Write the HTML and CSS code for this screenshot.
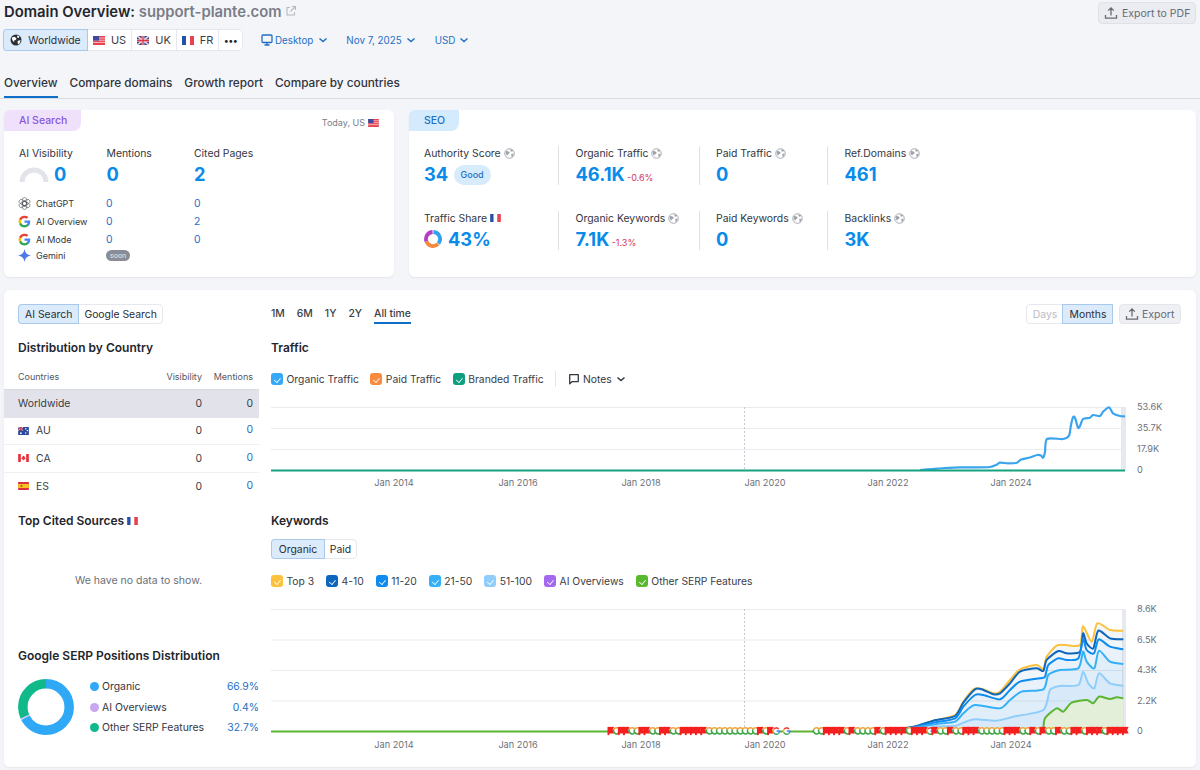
FILE: index.html
```html
<!DOCTYPE html>
<html lang="en">
<head>
<meta charset="utf-8">
<title>Domain Overview</title>
<link rel="stylesheet" href="styles.css">
</head>
<body>
<svg class="sprite" width="0" height="0" aria-hidden="true">
  <symbol id="f-us" viewBox="0 0 12 9"><rect width="12" height="9" fill="#e8424f"/><path d="M0 2h12M0 4.2h12M0 6.4h12" stroke="#f6c9cd" stroke-width=".9"/><rect width="6" height="4.6" fill="#3f4a9e"/></symbol>
  <symbol id="f-uk" viewBox="0 0 12 9"><rect width="12" height="9" fill="#3f4a8e"/><path d="M0 0l12 9M12 0L0 9" stroke="#f1d9dc" stroke-width="1.6"/><path d="M6 0v9M0 4.5h12" stroke="#f1d9dc" stroke-width="2.6"/><path d="M6 0v9M0 4.5h12" stroke="#d9364a" stroke-width="1.3"/></symbol>
  <symbol id="f-fr" viewBox="0 0 12 9"><rect width="4" height="9" fill="#2452a8"/><rect x="4" width="4" height="9" fill="#fff"/><rect x="8" width="4" height="9" fill="#e8424f"/></symbol>
  <symbol id="f-au" viewBox="0 0 12 9"><rect width="12" height="9" fill="#2b4a9c"/><path d="M0 0l5.5 4M5.5 0L0 4" stroke="#f3e1e4" stroke-width="1"/><path d="M2.8 0v4.2M0 2.1h5.6" stroke="#d9364a" stroke-width="1"/><circle cx="8.5" cy="2" r=".8" fill="#fff"/><circle cx="10.3" cy="4" r=".8" fill="#fff"/><circle cx="8.4" cy="6.8" r=".8" fill="#fff"/><circle cx="3" cy="7" r="1" fill="#fff"/></symbol>
  <symbol id="f-ca" viewBox="0 0 12 9"><rect width="12" height="9" fill="#fff"/><rect width="3" height="9" fill="#e8303f"/><rect x="9" width="3" height="9" fill="#e8303f"/><path d="M6 1.6l1 1.6.8-.3-.3 2 .9-.3-.5 1.3L6.2 6.400V7.600h-.4V6.400L4.100 5.900l-.5-1.300.9.300-.3-2 .8.300z" fill="#e8303f"/></symbol>
  <symbol id="f-es" viewBox="0 0 12 9"><rect width="12" height="9" fill="#d9303e"/><rect y="2.250" width="12" height="4.500" fill="#f7c21e"/><rect x="2.800" y="3.300" width="1.800" height="2.300" fill="#b5542a"/></symbol>
  <symbol id="i-globe" viewBox="0 0 12 12"><circle cx="6" cy="6" r="5.200" fill="#fff" stroke="#9ea2ab" stroke-width="1"/><path d="M2 3.400l2.600.2 1.700 1.500-1 1.400-1.300.2-.4 2-1.700-2.300zM7.200 1.400l2.800 1.300-1.200 1.500-1.900-.6zM8 6.400l2.500-.2-.8 2.900-1.500.8z" fill="#9ea2ab"/></symbol>
  <symbol id="i-world" viewBox="0 0 12 12"><circle cx="6" cy="6" r="5.500" fill="#2b3038"/><path d="M1.800 3.600l2.800-.8 2 1.600-1 1.700-1.200.2-.4 2-1.700-2.300zM7.400 1.400l2.200 1-1.200 1.500-1.500-.6zM7.500 7l3.100-1-.9 3.300-1.700 1.200z" fill="#fff"/></symbol>
  <symbol id="i-google" viewBox="0 0 24 24"><path d="M22.500 12.300c0-.8-.1-1.500-.2-2.200H12v4.200h5.900a5 5 0 0 1-2.200 3.300v2.700h3.500c2.100-1.900 3.300-4.700 3.300-8z" fill="#4285f4"/><path d="M12 23c3 0 5.400-1 7.200-2.700l-3.500-2.700c-1 .7-2.200 1-3.700 1-2.800 0-5.300-1.900-6.100-4.500H2.300v2.800A11 11 0 0 0 12 23z" fill="#34a853"/><path d="M5.900 14.100a6.600 6.600 0 0 1 0-4.200V7.100H2.300a11 11 0 0 0 0 9.800z" fill="#fbbc05"/><path d="M12 5.400c1.600 0 3 .5 4.100 1.600l3.100-3.100A11 11 0 0 0 2.300 7.100l3.600 2.800C6.700 7.300 9.200 5.400 12 5.400z" fill="#ea4335"/></symbol>
  <symbol id="i-gpt" viewBox="0 0 24 24"><g fill="none" stroke="#55585f" stroke-width="1.100"><rect x="8" y="1" width="8" height="15" rx="4"/><rect x="8" y="1" width="8" height="15" rx="4" transform="rotate(60 12 12)"/><rect x="8" y="1" width="8" height="15" rx="4" transform="rotate(120 12 12)"/><rect x="8" y="1" width="8" height="15" rx="4" transform="rotate(180 12 12)"/><rect x="8" y="1" width="8" height="15" rx="4" transform="rotate(240 12 12)"/><rect x="8" y="1" width="8" height="15" rx="4" transform="rotate(300 12 12)"/></g></symbol>
  <symbol id="i-gemini" viewBox="0 0 24 24"><path d="M12 0c.8 6.600 4.800 11 12 12-7.200 1-11.200 5.400-12 12-.8-6.600-4.800-11-12-12 7.200-1 11.200-5.400 12-12z" fill="#4f79ea"/></symbol>
  <symbol id="i-ext" viewBox="0 0 12 12"><path d="M5 2.500H2v7.500h7.500V7M7 1.500h3.500V5M10.500 1.500L5.500 6.500" fill="none" stroke="#b5b8c0" stroke-width="1.100"/></symbol>
  <symbol id="i-up" viewBox="0 0 14 14"><path d="M7 9.500V2M4.200 4.600L7 1.800l2.800 2.800M1.500 9v3.200h11V9" fill="none" stroke="currentColor" stroke-width="1.300"/></symbol>
  <symbol id="i-chev" viewBox="0 0 10 10"><path d="M1.500 3.500l3.500 3 3.500-3" fill="none" stroke="currentColor" stroke-width="1.500"/></symbol>
  <symbol id="i-desk" viewBox="0 0 12 12"><rect x="1" y="1" width="10" height="7.500" rx="1" fill="none" stroke="currentColor" stroke-width="1.300"/><path d="M3.500 11h5M6 8.500V11" stroke="currentColor" stroke-width="1.300"/></symbol>
  <symbol id="i-note" viewBox="0 0 14 14"><path d="M2 2h10v8H5l-3 2.500z" fill="none" stroke="currentColor" stroke-width="1.500" stroke-linejoin="round"/></symbol>
  <symbol id="m-flag" viewBox="0 0 9 9"><path d="M.5.200H7.200L5.600 3.400 7.200 7H2.400V8.800H.5z" fill="#f51f1f"/></symbol>
  <symbol id="m-g" viewBox="0 0 9 9"><circle cx="4.500" cy="4.500" r="3.200" fill="#fff"/><path d="M1.700 3A3.200 3.200 0 0 1 7 2.600" fill="none" stroke="#ea4335" stroke-width="1.500"/><path d="M1.700 3A3.200 3.200 0 0 0 1.700 6" fill="none" stroke="#fbbc05" stroke-width="1.500"/><path d="M1.700 6A3.200 3.200 0 0 0 6.600 7" fill="none" stroke="#34a853" stroke-width="1.500"/><path d="M6.600 7A3.200 3.200 0 0 0 7.700 4.500H4.700" fill="none" stroke="#4285f4" stroke-width="1.500"/></symbol>
  <symbol id="m-c" viewBox="0 0 9 9"><circle cx="4.500" cy="4.500" r="3.200" fill="#fff"/><path d="M7.300 3A3.200 3.200 0 0 0 1.700 3" fill="none" stroke="#f0a030" stroke-width="1.500"/><path d="M1.700 3A3.200 3.200 0 0 0 7.300 6" fill="none" stroke="#3fa648" stroke-width="1.500"/></symbol>
</svg>

<header class="page-head">
  <div class="title-row">
    <h1 class="title">Domain Overview: <span class="domain">support-plante.com</span> <svg class="ext"><use href="#i-ext"/></svg></h1>
    <button class="btn-pdf"><svg class="ic14"><use href="#i-up"/></svg>Export to PDF</button>
  </div>
  <div class="filters">
    <div class="seg seg-country">
      <span class="seg-item is-on"><svg class="ic12"><use href="#i-world"/></svg>Worldwide</span>
      <span class="seg-item"><svg class="flag"><use href="#f-us"/></svg>US</span>
      <span class="seg-item"><svg class="flag"><use href="#f-uk"/></svg>UK</span>
      <span class="seg-item"><svg class="flag"><use href="#f-fr"/></svg>FR</span>
      <span class="seg-item seg-more">•••</span>
    </div>
    <a class="drop drop-device"><svg class="ic12"><use href="#i-desk"/></svg>Desktop<svg class="ic10"><use href="#i-chev"/></svg></a>
    <a class="drop drop-date">Nov 7, 2025<svg class="ic10"><use href="#i-chev"/></svg></a>
    <a class="drop drop-cur">USD<svg class="ic10"><use href="#i-chev"/></svg></a>
  </div>
  <nav class="tabs">
    <a class="tab is-on">Overview</a>
    <a class="tab">Compare domains</a>
    <a class="tab">Growth report</a>
    <a class="tab">Compare by countries</a>
  </nav>
</header>

<section class="cards">
  <article class="card card-ai">
    <div class="card-tab tab-ai">AI Search</div>
    <div class="today">Today, US <svg class="flag"><use href="#f-us"/></svg></div>
    <div class="ai-grid">
      <div class="label">AI Visibility</div><div class="label">Mentions</div><div class="label">Cited Pages</div>
      <div class="big gauge-cell"><svg class="gauge" viewBox="0 0 30 15"><path d="M3 15a12 12 0 0 1 24 0" fill="none" stroke="#e2e4ea" stroke-width="5"/></svg>0</div><div class="big">0</div><div class="big">2</div>
    </div>
    <div class="ai-rows">
      <div class="ai-name"><svg class="ic13"><use href="#i-gpt"/></svg>ChatGPT</div><div class="ai-v">0</div><div class="ai-v">0</div>
      <div class="ai-name"><svg class="ic13"><use href="#i-google"/></svg>AI Overview</div><div class="ai-v">0</div><div class="ai-v">2</div>
      <div class="ai-name"><svg class="ic13"><use href="#i-google"/></svg>AI Mode</div><div class="ai-v">0</div><div class="ai-v">0</div>
      <div class="ai-name"><svg class="ic13"><use href="#i-gemini"/></svg>Gemini</div><div><span class="soon">soon</span></div><div></div>
    </div>
  </article>

  <article class="card card-seo">
    <div class="card-tab tab-seo">SEO</div>
    <div class="seo-grid">
      <div class="metric"><div class="label">Authority Score <svg class="ic11"><use href="#i-globe"/></svg></div><div class="big">34 <span class="good">Good</span></div></div>
      <div class="metric ruled"><div class="label">Organic Traffic <svg class="ic11"><use href="#i-globe"/></svg></div><div class="big">46.1K <span class="delta">-0.6%</span></div></div>
      <div class="metric ruled"><div class="label">Paid Traffic <svg class="ic11"><use href="#i-globe"/></svg></div><div class="big">0</div></div>
      <div class="metric ruled"><div class="label">Ref.Domains <svg class="ic11"><use href="#i-globe"/></svg></div><div class="big">461</div></div>
      <div class="metric"><div class="label">Traffic Share <svg class="flag"><use href="#f-fr"/></svg></div><div class="big share"><svg class="share-ring" viewBox="0 0 18 18"><g fill="none" stroke-width="3.800"><path d="M9.400 2a7 7 0 0 1 5 11.500" stroke="#2fa3f2"/><path d="M14 13.900A7 7 0 0 1 2.400 11.400" stroke="#f58a3c"/><path d="M2.400 11.400A7 7 0 0 1 8.600 2" stroke="#b43fc4"/></g></svg>43%</div></div>
      <div class="metric ruled"><div class="label">Organic Keywords <svg class="ic11"><use href="#i-globe"/></svg></div><div class="big">7.1K <span class="delta">-1.3%</span></div></div>
      <div class="metric ruled"><div class="label">Paid Keywords <svg class="ic11"><use href="#i-globe"/></svg></div><div class="big">0</div></div>
      <div class="metric ruled"><div class="label">Backlinks <svg class="ic11"><use href="#i-globe"/></svg></div><div class="big">3K</div></div>
    </div>
  </article>
</section>

<main class="card panel">
  <aside class="side">
    <div class="seg seg-small seg-source side-pad"><span class="seg-item is-on">AI Search</span><span class="seg-item">Google Search</span></div>
    <h2 class="h2 side-pad h-dist">Distribution by Country</h2>
    <div class="table">
      <div class="tr th"><span class="c1">Countries</span><span class="c2">Visibility</span><span class="c3">Mentions</span></div>
      <div class="tr is-sel"><span class="c1">Worldwide</span><span class="c2">0</span><span class="c3">0</span></div>
      <div class="tr"><span class="c1"><svg class="flag"><use href="#f-au"/></svg>AU</span><span class="c2">0</span><span class="c3 link">0</span></div>
      <div class="tr"><span class="c1"><svg class="flag"><use href="#f-ca"/></svg>CA</span><span class="c2">0</span><span class="c3 link">0</span></div>
      <div class="tr"><span class="c1"><svg class="flag"><use href="#f-es"/></svg>ES</span><span class="c2">0</span><span class="c3 link">0</span></div>
    </div>
    <h2 class="h2 side-pad h-cited">Top Cited Sources <svg class="flag"><use href="#f-fr"/></svg></h2>
    <p class="empty">We have no data to show.</p>
    <h2 class="h2 side-pad">Google SERP Positions Distribution</h2>
    <div class="serp side-pad">
      <svg class="donut" viewBox="0 0 56 56"><g fill="none" stroke-width="9.500" transform="rotate(-90 28 28)"><circle cx="28" cy="28" r="23.200" stroke="#2fa9f6" stroke-dasharray="97.500 48.300"/><circle cx="28" cy="28" r="23.200" stroke="#c9a7f0" stroke-dasharray="1 144.800" stroke-dashoffset="-97.900"/><circle cx="28" cy="28" r="23.200" stroke="#10b98a" stroke-dasharray="47 98.800" stroke-dashoffset="-98.800"/></g></svg>
      <ul class="serp-list">
        <li><i class="dot d-org"></i><span>Organic</span><b>66.9%</b></li>
        <li><i class="dot d-ai"></i><span>AI Overviews</span><b>0.4%</b></li>
        <li><i class="dot d-oth"></i><span>Other SERP Features</span><b>32.7%</b></li>
      </ul>
    </div>
  </aside>

  <section class="charts">
    <div class="toolbar">
      <div class="periods"><span>1M</span><span>6M</span><span>1Y</span><span>2Y</span><span class="is-on">All time</span></div>
      <div class="tools">
        <div class="seg seg-small"><span class="seg-item is-off">Days</span><span class="seg-item is-on">Months</span></div>
        <button class="btn-export"><svg class="ic14"><use href="#i-up"/></svg>Export</button>
      </div>
    </div>
    <h2 class="h2 h-traffic">Traffic</h2>
    <div class="legend legend-t">
      <span class="chk"><i class="box c-blue"></i>Organic Traffic</span>
      <span class="chk"><i class="box c-orange"></i>Paid Traffic</span>
      <span class="chk"><i class="box c-teal"></i>Branded Traffic</span>
      <span class="notes"><svg class="ic12"><use href="#i-note"/></svg>Notes<svg class="ic10"><use href="#i-chev"/></svg></span>
    </div>
    <svg class="chart chart-t" viewBox="271 400 925 90">
      <path class="grid" d="M271 407.500H1125M271 428.500H1125M271 449.500H1125"/>
      <path class="dash" d="M744.500 407V470"/>
      <rect class="band" x="1121" y="407" width="5" height="63"/>
      <polyline class="line-traffic js-smooth" points="920,470 933,469 945,468 960,467.300 975,467.400 990,467 996,465 1000,462.700 1008,463.300 1017,462.700 1021,459.500 1030,457.500 1037,455 1041,455.500 1043,457.700 1045,452 1047,439 1063,439 1069,435.700 1071,425 1073,417.300 1075,417.700 1078,427.700 1080,426 1083,419 1090,417.700 1093,415 1100,416 1103,411.700 1109,407.300 1113,413.300 1120,416 1125,416.300"/>
      <path class="line-green" d="M271 470.500H1125"/>
      <g class="ax"><text x="1137" y="410">53.6K</text><text x="1137" y="431">35.7K</text><text x="1137" y="452">17.9K</text><text x="1137" y="473">0</text></g>
      <g class="ax ax-x"><text x="394" y="486">Jan 2014</text><text x="518" y="486">Jan 2016</text><text x="641" y="486">Jan 2018</text><text x="765" y="486">Jan 2020</text><text x="888" y="486">Jan 2022</text><text x="1011" y="486">Jan 2024</text></g>
    </svg>
    <h2 class="h2 h-kw">Keywords</h2>
    <div class="seg seg-small seg-kw"><span class="seg-item is-on">Organic</span><span class="seg-item">Paid</span></div>
    <div class="legend legend-k">
      <span class="chk"><i class="box c-yellow"></i>Top 3</span>
      <span class="chk"><i class="box c-navy"></i>4-10</span>
      <span class="chk"><i class="box c-azure"></i>11-20</span>
      <span class="chk"><i class="box c-sky"></i>21-50</span>
      <span class="chk"><i class="box c-pale"></i>51-100</span>
      <span class="chk"><i class="box c-purple"></i>AI Overviews</span>
      <span class="chk"><i class="box c-green"></i>Other SERP Features</span>
    </div>
    <svg class="chart chart-k" viewBox="271 600 925 150">
      <path class="grid" d="M271 609.500H1125M271 640H1125M271 670.500H1125M271 701H1125"/>
      <path class="dash" d="M744.500 609V731"/>
      <rect class="band" x="1122" y="609" width="4" height="122"/>
      <g transform="translate(900 600) scale(.33333)">
        <polygon class="area a1" points="-30,393 50,378 100,362 165,345 190,305 220,268 245,266 280,280 300,275 330,240 360,208 410,195 430,208 440,170 470,137 495,135 540,135 549,78 575,125 592,70 630,90 670,92 670,393"/>
        <polygon class="area a2" points="-30,393 50,380 100,368 165,355 190,320 225,285 250,285 300,298 330,270 360,245 420,235 435,230 445,195 475,175 500,180 535,175 549,118 560,150 582,160 596,118 630,140 670,148 670,393"/>
        <polygon class="area a3" points="-30,393 50,382 110,372 165,365 190,340 225,315 300,325 330,300 365,275 430,268 445,225 480,210 535,205 549,155 560,185 583,205 597,152 630,185 670,192 670,393"/>
        <polygon class="area a4" points="80,393 100,380 165,378 190,368 225,358 290,362 340,350 430,330 450,270 480,258 535,255 549,215 565,250 583,265 597,220 630,250 670,257 670,393"/>
        <polygon class="area a5" points="430,393 435,355 470,325 490,335 515,308 560,300 580,310 597,290 630,297 650,292 670,295 670,393"/>
        <polyline class="kl kl-y js-smooth" points="-30,393 50,378 100,362 165,345 190,305 220,268 245,266 280,280 300,275 330,240 360,208 410,195 430,208 440,170 470,137 495,135 540,135 549,78 575,125 592,70 630,90 670,92"/>
        <polyline class="kl kl-n js-smooth" points="-30,393 50,378 100,362 165,348 190,308 225,268 245,268 280,283 300,280 330,250 360,215 410,205 430,213 440,180 475,153 500,160 540,155 549,100 560,130 580,145 595,92 630,115 670,118"/>
        <polyline class="kl kl-a js-smooth" points="-30,393 50,380 100,368 165,355 190,320 225,285 250,285 300,298 330,270 360,245 420,235 435,230 445,195 475,175 500,180 535,175 549,118 560,150 582,160 596,118 630,140 670,148"/>
        <polyline class="kl kl-s js-smooth" points="-30,393 50,382 110,372 165,365 190,340 225,315 300,325 330,300 365,275 430,268 445,225 480,210 535,205 549,155 560,185 583,205 597,152 630,185 670,192"/>
        <polyline class="kl kl-p js-smooth" points="80,393 100,380 165,378 190,368 225,358 290,362 340,350 430,330 450,270 480,258 535,255 549,215 565,250 583,265 597,220 630,250 670,257"/>
        <polyline class="kl kl-g js-smooth" points="430,393 435,355 470,325 490,335 515,308 560,300 580,310 597,290 630,297 650,292 670,295"/>
      </g>
      <path class="line-lime" d="M271 731.500H1125"/>
      <g id="markers"></g>
      <g class="ax"><text x="1137" y="612">8.6K</text><text x="1137" y="642.500">6.5K</text><text x="1137" y="673">4.3K</text><text x="1137" y="703.500">2.2K</text><text x="1137" y="734">0</text></g>
      <g class="ax ax-x"><text x="394" y="748">Jan 2014</text><text x="518" y="748">Jan 2016</text><text x="641" y="748">Jan 2018</text><text x="765" y="748">Jan 2020</text><text x="888" y="748">Jan 2022</text><text x="1011" y="748">Jan 2024</text></g>
    </svg>
  </section>
</main>
<script src="markers.js"></script>
</body>
</html>
```

FILE: styles.css
```css
* { box-sizing: border-box; }
html, body { margin: 0; padding: 0; }
body {
  width: 1200px; height: 770px; overflow: hidden;
  background: #f4f5f9; color: #2a2d35;
  font-family: Inter, "Liberation Sans", sans-serif; font-size: 11px;
}
.sprite { position: absolute; }
svg { flex: none; }
.ic10 { width: 10px; height: 10px; }
.ic11 { width: 11px; height: 11px; vertical-align: -2px; }
.ic12 { width: 12px; height: 12px; }
.ic13 { width: 13px; height: 13px; }
.ic14 { width: 14px; height: 14px; }
.flag { width: 11px; height: 8px; }
a { color: inherit; text-decoration: none; }
h1, h2, p, ul { margin: 0; padding: 0; }

.page-head { height: 99px; padding: 0 4px; border-bottom: 1px solid #dadce3; display: flex; flex-direction: column; }
.title-row { display: flex; justify-content: space-between; align-items: flex-start; height: 26px; padding-top: 2px; }
.title { font-size: 14.800px; font-weight: 600; line-height: 21px; color: #23262d; }
.domain { color: #7a7d87; }
.ext { width: 12px; height: 12px; vertical-align: 0; }
.btn-pdf { display: flex; align-items: center; gap: 4px; height: 22px; width: 98px; padding: 0 0 0 5px; border: 1px solid #dfe1e6; border-radius: 4px; background: #eaecf1; color: #676a74; font: 10.500px Inter, sans-serif; }

.filters { display: flex; align-items: center; height: 22px; margin-top: 3px; margin-left: -1px; }
.seg { display: inline-flex; border: 1px solid #e6e8ed; border-radius: 4px; background: #fff; }
.seg-item { display: flex; align-items: center; justify-content: center; gap: 5px; height: 100%; border-left: 1px solid #e6e8ed; }
.seg-item:first-child { border-left: 0; border-radius: 3px 0 0 3px; }
.seg-item.is-on { background: #dcebfb; box-shadow: 0 0 0 1px #a9c9ea; color: #2a2d35; position: relative; }
.seg-item.is-off { color: #b9bcc4; }
.seg-country { height: 22px; font-size: 11px; color: #3a3d46; }
.seg-country .flag { width: 12px; height: 9px; }
.seg-country .seg-item { gap: 6px; }
.seg-country .seg-item:nth-child(1) { width: 83px; font-size: 10.400px; }
.seg-country .seg-item:nth-child(2) { width: 44px; }
.seg-country .seg-item:nth-child(3) { width: 45px; }
.seg-country .seg-item:nth-child(4) { width: 42px; }
.seg-country .seg-item:nth-child(5) { width: 24px; }
.seg-more { font-size: 9px; letter-spacing: -.5px; color: #23262d; }
.drop { display: inline-flex; align-items: center; gap: 4px; color: #1e6fc4; font-size: 9.800px; }
.drop-device { margin-left: 18px; gap: 2px; }
.drop-device .ic10 { margin-left: 3px; }
.drop-date { margin-left: 18px; }
.drop-cur { margin-left: 19px; }

.tabs { display: flex; gap: 12px; margin-top: auto; height: 28px; }
.tab { display: block; height: 28px; padding-top: 5px; line-height: 16px; font-size: 11.800px; font-weight: 500; color: #30333b; }
.tab.is-on { border-bottom: 2px solid #0f6fc6; }

.cards { display: flex; gap: 15px; padding: 0 4px; margin-top: 11px; }
.card { background: #fff; border-radius: 6px; box-shadow: 0 1px 2px rgba(40,50,70,.08); }
.card-ai { width: 390px; height: 167px; position: relative; }
.card-seo { flex: 1; height: 167px; }
.card-tab { height: 21px; line-height: 21px; font-size: 10.500px; font-weight: 500; border-radius: 6px 0 8px 0; }
.tab-ai { width: 77px; padding-left: 15px; background: #efe1fb; color: #8a55dd; }
.tab-seo { width: 50px; padding-left: 15px; background: #d3ebfc; color: #1d6fbe; }
.today { position: absolute; top: 7px; right: 15px; display: flex; align-items: center; gap: 3px; font-size: 9px; color: #7a7d87; }

.label { font-size: 10.400px; height: 14px; line-height: 16px; color: #33363e; white-space: nowrap; }
.big { font-size: 18.300px; font-weight: 650; line-height: 24px; color: #0a8bea; white-space: nowrap; }
.ai-grid { display: grid; grid-template-columns: 87.500px 87.500px 1fr; padding: 15px 0 0 15px; row-gap: 2px; }
.gauge-cell { display: flex; align-items: center; gap: 5px; }
.gauge { width: 30px; height: 15px; }
.ai-rows { display: grid; grid-template-columns: 88px 88px 1fr; grid-template-rows: 18px 18px 18px 15px; padding: 8px 0 0 14px; font-size: 9px; align-items: center; }
.ai-name { display: flex; align-items: center; gap: 5px; color: #33363e; }
.ai-v { color: #1e6fc4; font-size: 10.400px; }
.soon { display: inline-block; height: 11px; line-height: 11px; padding: 0 4px; border-radius: 6px; background: #8a8d97; color: #e6e7ea; font-size: 7px; vertical-align: 1px; }

.seo-grid { display: grid; grid-template-columns: 149px 140.500px 128.500px 1fr; grid-template-rows: 39px 39px; row-gap: 26px; margin-top: 15px; }
.metric { padding-left: 15px; }
.metric.ruled { padding-left: 16.500px; border-left: 1px solid #dfe1e6; height: 39px; }
.metric .big { margin-top: 2px; }
.good { display: inline-block; height: 20px; line-height: 20px; padding: 0 7px; margin-left: 1px; border-radius: 10px; background: #d6ebfb; color: #1e6fc4; font-size: 9px; font-weight: 500; vertical-align: 3px; }
.delta { font-size: 9px; font-weight: 400; color: #d6345a; margin-left: -2px; vertical-align: 0; }
.share { display: flex; align-items: center; gap: 6px; }
.share-ring { width: 18px; height: 18px; }

.panel { margin: 13px 4px 0; height: 477px; display: flex; gap: 12px; }
.side { width: 255px; padding-top: 14px; }
.side-pad { margin-left: 14px; }
.seg-small { height: 20px; font-size: 10.400px; }
.seg-small .seg-item { padding: 0 6px; }
.seg-source .seg-item:last-child { padding: 0 5px; }
.h2 { font-size: 12px; font-weight: 600; line-height: 16px; color: #23262d; }
.h-dist { margin-top: 16px; }
.table { margin-top: 8.500px; }
.tr { display: flex; align-items: center; height: 27.500px; padding-left: 14px; font-size: 10.400px; border-bottom: 1px solid #eef0f3; color: #3a3d46; }
.tr.th { height: 25px; font-size: 9px; color: #54575f; border-bottom: 1px solid #d8dae1; }
.tr.is-sel { height: 28px; background: #e2e3ea; border-bottom: 0; }
.tr:last-child { border-bottom: 0; }
.c1 { flex: 1; display: flex; align-items: center; gap: 7px; }
.c2 { width: 50px; text-align: right; margin-left: -20px; }
.c3 { width: 57px; text-align: right; padding-right: 6px; }
.link { color: #1e6fc4; position: relative; top: -1px; }
.h-cited { margin-top: 12.500px; }
.empty { height: 119px; padding: 38px 0 0 14px; line-height: 28px; text-align: center; color: #6c6f78; font-size: 10.500px; }
.serp { display: flex; align-items: center; margin-top: 13px; gap: 16px; }
.donut { width: 56px; height: 56px; }
.serp-list { list-style: none; flex: 1; }
.serp-list li { display: flex; align-items: center; height: 20.500px; font-size: 10.400px; color: #33363e; }
.serp-list span { flex: 1; }
.serp-list b { font-weight: 400; color: #1e6fc4; }
.dot { width: 9px; height: 9px; border-radius: 50%; margin-right: 3px; }
.d-org { background: #2fa9f6; }
.d-ai { background: #c9a7f0; }
.d-oth { background: #10b98a; }

.charts { flex: 1; padding-top: 14px; min-width: 0; }
.toolbar { display: flex; justify-content: space-between; height: 20px; padding-right: 15px; }
.periods { display: flex; gap: 12px; font-size: 10.400px; font-weight: 500; color: #3a3d46; }
.periods span { display: block; height: 20px; line-height: 19px; }
.periods .is-on { border-bottom: 2px solid #0f6fc6; }
.tools { display: flex; gap: 6px; }
.tools .seg-item:first-child { width: 36px; }
.tools .seg-item:last-child { width: 49px; }
.btn-export { display: flex; align-items: center; gap: 3px; height: 20px; width: 62px; padding: 0 0 0 5px; border: 1px solid #e3e5ea; border-radius: 4px; background: #eff0f4; color: #676a74; font: 10.500px Inter, sans-serif; }
.h-traffic { margin-top: 16px; }
.legend { display: flex; align-items: center; height: 16px; font-size: 10.300px; color: #3a3d46; }
.legend-t { margin-top: 15px; gap: 11.500px; }
.legend-k { margin-top: 14px; gap: 12px; }
.chk { display: inline-flex; align-items: center; gap: 3.500px; }
.box { position: relative; width: 12px; height: 12px; border-radius: 3px; }
.box::after { content: ""; position: absolute; left: 4px; top: 2.500px; width: 4px; height: 5.500px; border: solid #fff; border-width: 0 1.300px 1.300px 0; transform: rotate(40deg) scale(.85); }
.c-blue { background: #35a8f7; } .c-orange { background: #f88b3d; } .c-teal { background: #0e9f7e; }
.c-yellow { background: #fcc13d; } .c-navy { background: #0d66bd; } .c-azure { background: #0d8bef; }
.c-sky { background: #35b0f8; } .c-pale { background: #90cdfa; } .c-purple { background: #a368ee; } .c-green { background: #58b82e; }
.notes { display: inline-flex; align-items: center; gap: 3px; height: 16px; padding-left: 12px; border-left: 1px solid #e4e6eb; color: #33363e; }
.notes .ic10 { margin-left: 1px; }
.chart { display: block; width: 925px; }
.chart-t { height: 90px; margin-top: 13px; }
.chart-k { height: 150px; margin-top: 11px; }
.h-kw { margin-top: 23px; }
.seg-kw { margin-top: 10px; }
.seg-kw .seg-item:first-child { width: 52px; }
.seg-kw .seg-item:last-child { width: 32px; }

.grid { stroke: #e9ebef; stroke-width: 1; fill: none; }
.dash { stroke: #c6c9d0; stroke-width: 1; stroke-dasharray: 2 2; fill: none; }
.band { fill: #e6e9ed; }
.ax text { font-size: 9.200px; fill: #6d7079; font-family: Inter, sans-serif; }
.ax-x text { text-anchor: middle; }
.line-traffic { fill: none; stroke: #3aa4ec; stroke-width: 2.200; stroke-linejoin: round; }
.line-green { fill: none; stroke: #14a37f; stroke-width: 2; }
.line-lime { fill: none; stroke: #5cb531; stroke-width: 2; }
.area { stroke: none; }
.a1 { fill: #0d66bd; fill-opacity: .06; }
.a2 { fill: #0d8bef; fill-opacity: .03; }
.a3 { fill: #35b0f8; fill-opacity: .05; }
.a4 { fill: #90cdfa; fill-opacity: .1; }
.a5 { fill: #e3efd9; }
.kl { fill: none; stroke-width: 6; stroke-linejoin: round; }
.kl-y { stroke: #fcc13d; }
.kl-n { stroke: #0d66bd; }
.kl-a { stroke: #0d8bef; }
.kl-s { stroke: #35b0f8; }
.kl-p { stroke: #90cdfa; }
.kl-g { stroke: #5cb531; }
```

FILE: markers.js
```js
(function () {
  var NS = 'http://www.w3.org/2000/svg';

  // One SERP-feature marker per month on the keyword chart's baseline.
  var host = document.getElementById('markers');
  var STEP = 5.15;
  var KIND = { F: '#m-flag', C: '#m-c', G: '#m-g' };
  var runs = [
    { x: 607, s: 'FCFFCCFFCCFFCCFFFFFCCCCCCCCCCFCFG-G' },
    { x: 812, s: 'CCFFFFCFCCCCFCFFF' },
    { x: 900, s: 'FCFFFGFCCFCCFFFCCCCCFFFCCFCFCCFCCFFCFFFCFFFF' }
  ];
  runs.forEach(function (run) {
    run.s.split('').forEach(function (ch, i) {
      if (!KIND[ch]) return;
      var use = document.createElementNS(NS, 'use');
      use.setAttribute('href', KIND[ch]);
      use.setAttribute('x', (run.x + i * STEP).toFixed(1));
      use.setAttribute('y', 726.5);
      use.setAttribute('width', 9);
      use.setAttribute('height', 9);
      host.appendChild(use);
    });
  });

  // Chart series are drawn as smoothed curves through their data points.
  var TENSION = 1 / 8;
  document.querySelectorAll('polyline.js-smooth').forEach(function (line) {
    var p = line.getAttribute('points').trim().split(/\s+/).map(function (xy) {
      return xy.split(',').map(Number);
    });
    var d = 'M' + p[0].join(' ');
    for (var i = 0; i < p.length - 1; i++) {
      var a = p[Math.max(i - 1, 0)], b = p[i], c = p[i + 1], e = p[Math.min(i + 2, p.length - 1)];
      d += 'C' + (b[0] + (c[0] - a[0]) * TENSION) + ' ' + (b[1] + (c[1] - a[1]) * TENSION) +
           ' ' + (c[0] - (e[0] - b[0]) * TENSION) + ' ' + (c[1] - (e[1] - b[1]) * TENSION) +
           ' ' + c[0] + ' ' + c[1];
    }
    var path = document.createElementNS(NS, 'path');
    path.setAttribute('class', line.getAttribute('class'));
    path.setAttribute('d', d);
    line.parentNode.replaceChild(path, line);
  });
})();
```
